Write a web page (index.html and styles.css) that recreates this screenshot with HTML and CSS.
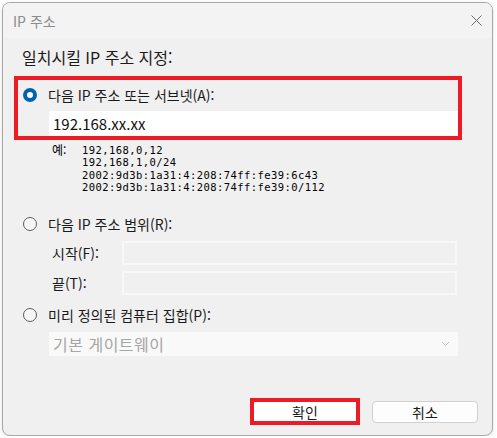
FILE: index.html
```html
<!DOCTYPE html>
<html lang="ko">
<head>
    <meta charset="UTF-8">
    <title>IP 주소</title>
    <link rel="stylesheet" href="styles.css">
</head>
<body>
    <div class="window">
        <div class="titlebar">
            <span class="title">IP 주소</span>
            <svg class="close" width="11" height="11" viewBox="0 0 11 11">
                <path d="M0.5 0.5 L10.5 10.5 M10.5 0.5 L0.5 10.5" stroke="#6b6b6b" stroke-width="1" fill="none"/>
            </svg>
        </div>

        <div class="content">
            <div class="heading">일치시킬 IP 주소 지정:</div>

            <div class="highlight">
                <div class="radio-row">
                    <span class="radio checked"></span>
                    <span class="label">다음 IP 주소 또는 서브넷(A):</span>
                </div>
                <div class="text-input">192.168.xx.xx</div>
            </div>

            <div class="example">
                <div class="example-label">예:</div>
                <div class="example-lines">
                    <div>192,168,0,12</div>
                    <div>192,168,1,0/24</div>
                    <div>2002:9d3b:1a31:4:208:74ff:fe39:6c43</div>
                    <div>2002:9d3b:1a31:4:208:74ff:fe39:0/112</div>
                </div>
            </div>

            <div class="radio-row second">
                <span class="radio"></span>
                <span class="label">다음 IP 주소 범위(R):</span>
            </div>
            <div class="field-row first">
                <span class="field-label">시작(F):</span>
                <div class="text-input disabled"></div>
            </div>
            <div class="field-row">
                <span class="field-label">끝(T):</span>
                <div class="text-input disabled"></div>
            </div>

            <div class="radio-row third">
                <span class="radio"></span>
                <span class="label">미리 정의된 컴퓨터 집합(P):</span>
            </div>
            <div class="select">
                <span>기본 게이트웨이</span>
                <svg width="9" height="6" viewBox="0 0 9 6">
                    <path d="M1 1 L4.5 4.5 L8 1" stroke="#c4c4c4" stroke-width="1" fill="none"/>
                </svg>
            </div>

            <div class="buttons">
                <button class="btn ok">확인</button>
                <button class="btn">취소</button>
            </div>
        </div>
    </div>
</body>
</html>
```

FILE: styles.css
```css
body {
    margin: 0;
    padding: 2px 0 0 2px;
    background-color: #ffffff;
    font-family: "Noto Sans CJK KR", "Noto Sans", sans-serif;
    color: #1a1a1a;
}
.window {
    width: 491px;
    height: 434px;
    box-sizing: border-box;
    border: 1px solid #a8a8a8;
    border-radius: 8px;
    overflow: hidden;
    background-color: #f0f0f0;
    box-shadow: 0 1px 4px rgba(0,0,0,0.12);
}
.titlebar {
    height: 35px;
    display: flex;
    align-items: center;
    justify-content: space-between;
    padding: 0 10px;
    background-color: #f3f3f3;
}
.title {
    font-size: 14px;
    color: #8c8c8c;
}
.content {
    padding: 0 14px 0 11px;
}
.heading {
    margin: 10px 0 0 8px;
    height: 18px;
    line-height: 18px;
    font-size: 16px;
}
.highlight {
    margin-top: 10px;
    width: 448px;
    height: 64px;
    box-sizing: border-box;
    border: 4px solid #ed1c24;
}
.radio-row {
    display: flex;
    align-items: center;
    height: 30px;
    padding-left: 5px;
}
.radio-row.second,
.radio-row.third {
    height: 24px;
    padding-left: 9px;
}
.radio-row.second {
    margin-top: 19px;
}
.radio-row.third {
    margin-top: 8px;
}
.radio {
    width: 14px;
    height: 14px;
    box-sizing: border-box;
    border: 1px solid #5c5c5c;
    border-radius: 50%;
    background-color: #f6f6f6;
    flex-shrink: 0;
}
.radio.checked {
    border: 4px solid #0063b1;
    background-color: #ffffff;
}
.label {
    margin-left: 11px;
    font-size: 14px;
    line-height: 18px;
}
.text-input {
    height: 25px;
    line-height: 25px;
    margin: 1px 0 0 31px;
    padding-left: 4px;
    width: 409px;
    box-sizing: border-box;
    background-color: #ffffff;
    font-size: 15px;
    color: #111;
}
.example {
    display: flex;
    margin: 4px 0 0 38px;
}
.example-label {
    width: 30px;
    font-size: 12px;
    line-height: 12.3px;
    color: #000;
}
.example-lines {
    font-family: "DejaVu Sans Mono", monospace;
    font-size: 10.5px;
    line-height: 12.3px;
    letter-spacing: 0.43px;
    color: #000;
}
.field-row {
    display: flex;
    align-items: center;
    margin: 6px 0 0 38px;
}
.field-row.first {
    margin-top: 5px;
}
.field-label {
    width: 70px;
    font-size: 14px;
}
.text-input.disabled {
    margin: 0;
    width: 335px;
    height: 24px;
    background-color: #f0f0f0;
    border: 2px solid #f8f8f8;
}
.select {
    display: flex;
    align-items: center;
    justify-content: space-between;
    margin: 5px 0 0 35px;
    width: 409px;
    height: 24px;
    box-sizing: border-box;
    padding: 0 8px 0 4px;
    background-color: #f9f9f9;
    font-size: 16px;
    letter-spacing: 0.5px;
    color: #a6a6a6;
}
.buttons {
    display: flex;
    justify-content: flex-end;
    align-items: center;
    margin-top: 42px;
}
.btn {
    width: 106px;
    height: 22px;
    padding: 0;
    margin-left: 12px;
    box-sizing: border-box;
    border: 1px solid #d0d0d0;
    border-radius: 4px;
    background-color: #fdfdfd;
    font-family: "Noto Sans CJK KR", sans-serif;
    font-size: 14px;
    color: #1a1a1a;
}
.btn.ok {
    width: 110px;
    height: 27px;
    margin-left: 0;
    border: 4px solid #ed1c24;
    border-radius: 0;
    background-color: #ffffff;
}
```
